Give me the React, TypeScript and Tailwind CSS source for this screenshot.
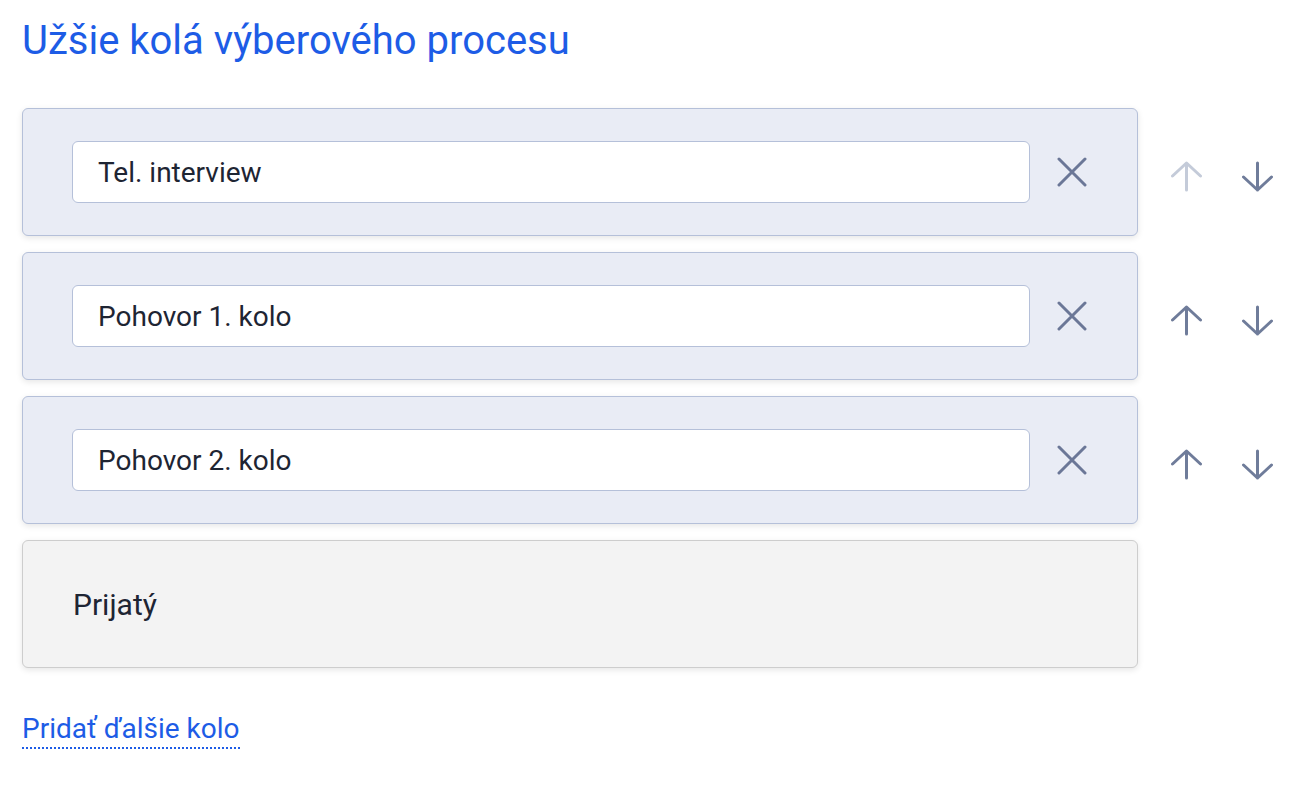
const rounds = [
  { name: "Tel. interview", canUp: false, canDown: true },
  { name: "Pohovor 1. kolo", canUp: true, canDown: true },
  { name: "Pohovor 2. kolo", canUp: true, canDown: true },
];

function CloseIcon() {
  return (
    <svg width="30" height="30" viewBox="0 0 30 30" fill="none">
      <path
        d="M2 2 L28 28 M28 2 L2 28"
        stroke="#6b7797"
        strokeWidth="3"
        strokeLinecap="round"
      />
    </svg>
  );
}

function ArrowIcon({ up, disabled }: { up?: boolean; disabled?: boolean }) {
  const color = disabled ? "#c4cbd9" : "#6f7c9a";
  return (
    <svg
      width="33"
      height="31"
      viewBox="0 0 33 31"
      fill="none"
      className={up ? "" : "rotate-180"}
    >
      <path
        d="M16.5 2 L16.5 29 M2.5 15 L16.5 2 L30.5 15"
        stroke={color}
        strokeWidth="3"
        strokeLinecap="round"
        strokeLinejoin="round"
      />
    </svg>
  );
}

export default function App() {
  return (
    <div className="min-h-screen bg-white px-[22px] pt-[21px] font-['Roboto',sans-serif]">
      <h1 className="text-[40px] leading-none font-normal text-[#1d5ce6]">
        Užšie kolá výberového procesu
      </h1>

      <div className="mt-[47px] flex flex-col gap-[16px]">
        {rounds.map((round) => (
          <div key={round.name} className="flex items-center">
            <div className="flex h-[128px] w-[1116px] items-center rounded-[6px] border border-[#b5c0d9] bg-[#e9ecf5] pl-[49px] pr-[23px] shadow-[0_2px_6px_rgba(0,0,0,0.1)]">
              <input
                readOnly
                defaultValue={round.name}
                className="h-[62px] flex-1 rounded-[6px] border border-[#b5c0d9] bg-white pl-[25px] text-[28px] text-[#1e2533] outline-none"
              />
              <button className="flex h-[62px] w-[84px] items-center justify-center">
                <CloseIcon />
              </button>
            </div>
            <div className="ml-[32px] mt-[9px] flex gap-[38px]">
              <ArrowIcon up disabled={!round.canUp} />
              <ArrowIcon disabled={!round.canDown} />
            </div>
          </div>
        ))}

        <div className="flex h-[128px] w-[1116px] items-center rounded-[6px] border border-[#cdcdcd] bg-[#f3f3f3] pl-[50px] shadow-[0_2px_6px_rgba(0,0,0,0.1)]">
          <span className="text-[30px] text-[#1e2533]">Prijatý</span>
        </div>
      </div>

      <a
        href="#"
        className="mt-[47px] inline-block border-b-2 border-dotted border-[#1d5ce6] pb-[4px] text-[28px] leading-[28px] text-[#1d5ce6]"
      >
        Pridať ďalšie kolo
      </a>
    </div>
  );
}
